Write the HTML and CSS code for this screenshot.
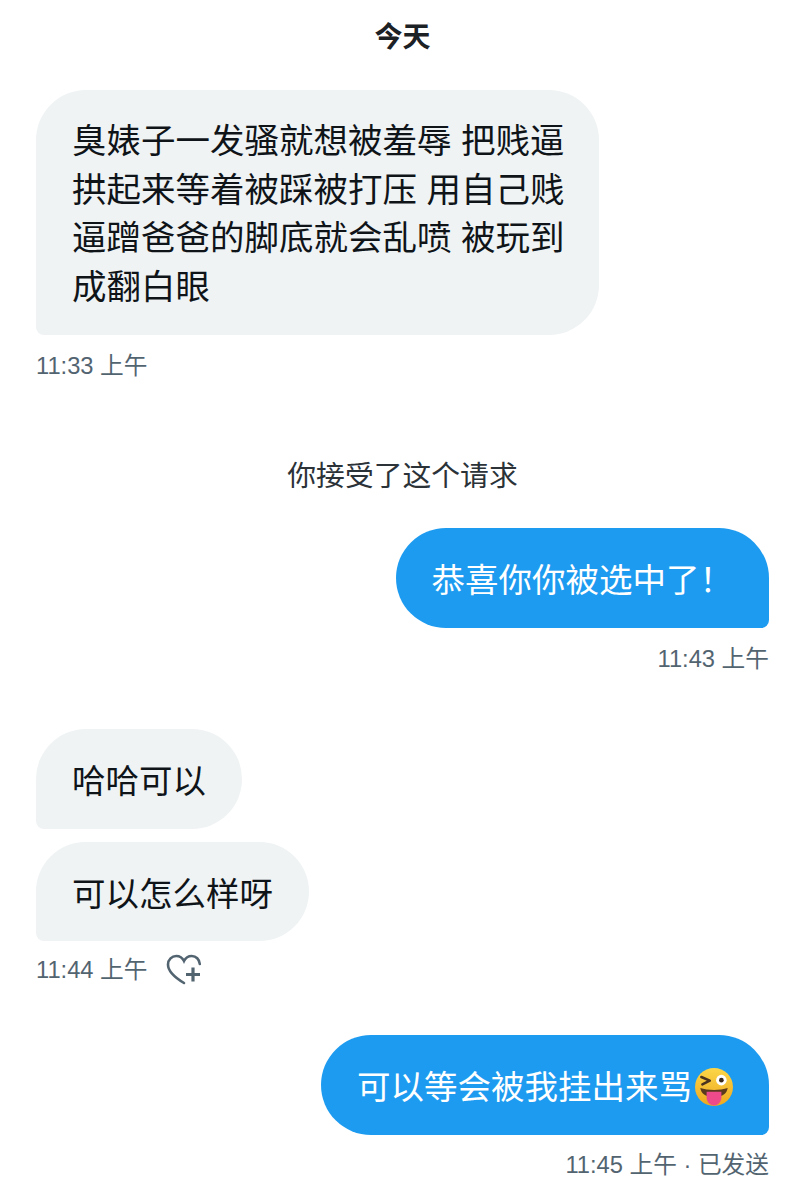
FILE: index.html
```html
<!DOCTYPE html>
<html lang="zh-CN">

<head>
    <meta charset="UTF-8">
    <meta name="viewport" content="width=device-width, initial-scale=1.0">
    <title>Messages</title>
    <link rel="stylesheet" href="styles.css">
</head>

<body>
    <main class="thread">
        <h1 class="day">今天</h1>

        <div class="bubble in first">臭婊子一发骚就想被羞辱 把贱逼拱起来等着被踩被打压 用自己贱逼蹭爸爸的脚底就会乱喷 被玩到成翻白眼</div>
        <div class="meta">11:33 上午</div>

        <p class="notice">你接受了这个请求</p>

        <div class="bubble out after-notice">恭喜你你被选中了！</div>
        <div class="meta out">11:43 上午</div>

        <div class="bubble in new-group">哈哈可以</div>
        <div class="bubble in next">可以怎么样呀</div>
        <div class="meta tight">
            11:44 上午
            <svg class="react" viewBox="0 0 36 32" width="36" height="32" aria-hidden="true">
                <path d="M18 29 C13 26 2 19 2 10.5 C2 5.5 6 2 10.2 2 C13.6 2 16.4 3.8 18 7 C19.6 3.8 22.4 2 25.8 2 C30 2 33.4 5.2 33.8 10" fill="none" stroke="#536471" stroke-width="2.6" stroke-linecap="round" />
                <path d="M27 13.5 V27.5 M20 20.5 H34" fill="none" stroke="#536471" stroke-width="3.2" />
            </svg>
        </div>

        <div class="bubble out last-group">可以等会被我挂出来骂<svg class="emoji" viewBox="0 0 36 36" width="38" height="38" aria-hidden="true">
                <defs>
                    <linearGradient id="faceFill" x1="0" y1="0" x2="0" y2="1">
                        <stop offset="0" stop-color="#fbd648" />
                        <stop offset="1" stop-color="#eea81f" />
                    </linearGradient>
                </defs>
                <circle cx="18" cy="18" r="18" fill="url(#faceFill)" />
                <path d="M6 8.5 L14 12 L7 15.5" fill="none" stroke="#4a3420" stroke-width="2.4" stroke-linecap="round" stroke-linejoin="round" />
                <circle cx="25" cy="11.5" r="5" fill="#fff" />
                <circle cx="25" cy="11.5" r="2.2" fill="#3a2a1c" />
                <path d="M5 19 C12 21.5 24 21.5 31 19 C30 24 27 26 24 26.5 H12 C9 26 6 24 5 19 Z" fill="#5b3a1e" />
                <path d="M11 22.5 H25 V28 C25 32 22 35.5 18 35.5 C14 35.5 11 32 11 28 Z" fill="#ec4a8b" />
            </svg></div>
        <div class="meta out sent">11:45 上午 · 已发送</div>
    </main>
</body>

</html>
```

FILE: styles.css
```css
* {
    box-sizing: border-box;
}

body {
    margin: 0;
    background: #fff;
    color: #0f1419;
    font-family: "Liberation Sans", "Noto Sans CJK SC", sans-serif;
}

.thread {
    display: flex;
    flex-direction: column;
    padding: 0 36px;
}

.day {
    margin: 0 0 14px;
    color: #1c2126;
    font-size: 28px;
    font-weight: 700;
    line-height: 76px;
    text-align: center;
}

.bubble {
    padding: 28px 36px 22px;
    border-radius: 50px;
    font-size: 33.5px;
    line-height: 49.5px;
}

.bubble.in {
    align-self: flex-start;
    background: #eff3f4;
    border-bottom-left-radius: 8px;
}

.bubble.out {
    align-self: flex-end;
    background: #1d9bf0;
    color: #fff;
    border-bottom-right-radius: 8px;
}

.bubble.first {
    width: 563px;
    padding: 27px 20px 23px 36px;
    font-size: 34.5px;
    line-height: 48.7px;
}

.after-notice {
    margin-top: 32px;
}

.new-group {
    margin-top: 53px;
}

.last-group {
    margin-top: 48px;
}

.bubble.next {
    margin-top: 13px;
}

.meta {
    display: flex;
    align-items: center;
    gap: 19px;
    margin-top: 14.5px;
    color: #536471;
    font-size: 23.7px;
    line-height: 34px;
}

.meta.out {
    align-self: flex-end;
}

.meta.tight {
    margin-top: 12px;
}

.meta.sent {
    margin-top: 13px;
}

.notice {
    margin: 73px 0 0;
    color: #2b3238;
    font-size: 28.8px;
    line-height: 40px;
    text-align: center;
}

.emoji {
    vertical-align: -7px;
    margin-left: 3px;
}

.react {
    display: block;
}
```
